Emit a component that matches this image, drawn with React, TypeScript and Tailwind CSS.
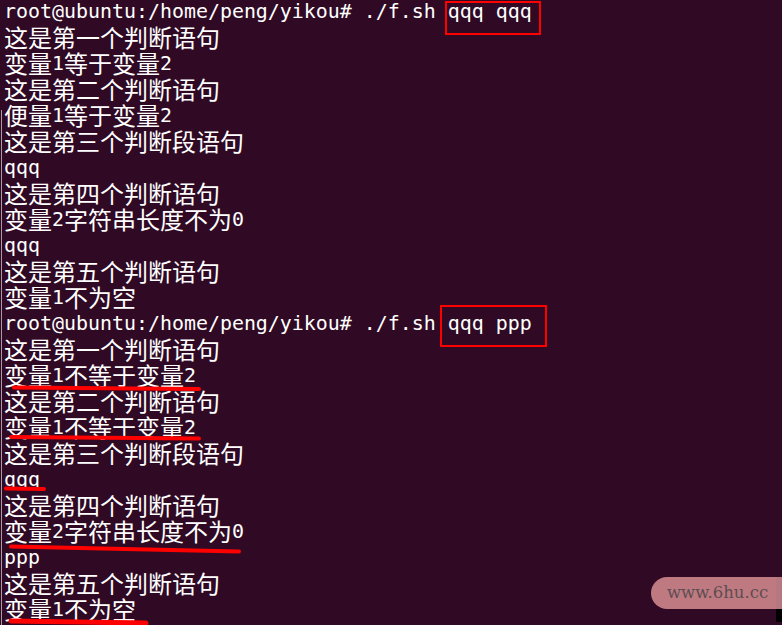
import React from "react";

const LINES: string[] = [
  "root@ubuntu:/home/peng/yikou# ./f.sh qqq qqq",
  "这是第一个判断语句",
  "变量1等于变量2",
  "这是第二个判断语句",
  "便量1等于变量2",
  "这是第三个判断段语句",
  "qqq",
  "这是第四个判断语句",
  "变量2字符串长度不为0",
  "qqq",
  "这是第五个判断语句",
  "变量1不为空",
  "root@ubuntu:/home/peng/yikou# ./f.sh qqq ppp",
  "这是第一个判断语句",
  "变量1不等于变量2",
  "这是第二个判断语句",
  "变量1不等于变量2",
  "这是第三个判断段语句",
  "qqq",
  "这是第四个判断语句",
  "变量2字符串长度不为0",
  "ppp",
  "这是第五个判断语句",
  "变量1不为空",
];

const CJK = /[\u4e00-\u9fff]/;

function Line({ text }: { text: string }) {
  const parts = text.match(/[\u4e00-\u9fff]+|[^\u4e00-\u9fff]+/g) || [];
  return (
    <div className="h-[26px] leading-[26px] whitespace-pre">
      {parts.map((p, i) =>
        CJK.test(p) ? (
          <span
            key={i}
            className="inline-block h-[26px] align-top font-['Noto_Sans_CJK_SC',sans-serif] text-[24px] leading-[23px]"
          >
            {p}
          </span>
        ) : (
          <span key={i}>{p}</span>
        )
      )}
    </div>
  );
}

export default function App() {
  return (
    <div className="relative w-[782px] h-[625px] overflow-hidden bg-[#300a24] text-white font-['DejaVu_Sans_Mono',monospace] text-[19.93px]">
      <div className="flex flex-col pl-[4px] -mt-[1px]">
        {LINES.map((l, i) => (
          <Line key={i} text={l} />
        ))}
      </div>

      {/* left edge line */}
      <div className="absolute left-[1px] top-[110px] bottom-0 w-[1px] bg-[#a99aa4]" />

      {/* annotations */}
      <svg
        className="absolute inset-0 pointer-events-none"
        width="782"
        height="625"
        viewBox="0 0 782 625"
      >
        <rect x="446" y="2" width="94" height="32" fill="none" stroke="#ff0000" strokeWidth="2" />
        <rect x="441" y="306" width="105" height="40" fill="none" stroke="#ff0000" strokeWidth="2" />
        <line x1="14" y1="387.5" x2="199" y2="389" stroke="#ff0000" strokeWidth="4" strokeLinecap="round" />
        <line x1="11" y1="437" x2="199" y2="438.5" stroke="#ff0000" strokeWidth="4" strokeLinecap="round" />
        <line x1="6" y1="488.5" x2="44" y2="489" stroke="#ff0000" strokeWidth="4" strokeLinecap="round" />
        <line x1="11" y1="546.5" x2="239" y2="551.5" stroke="#ff0000" strokeWidth="4" strokeLinecap="round" />
        <line x1="11" y1="621" x2="146" y2="623" stroke="#ff0000" strokeWidth="5" strokeLinecap="round" />
      </svg>

      {/* watermark */}
      <div className="absolute left-[651px] top-[577px] w-[131px] h-[32px] flex">
        <div className="flex-1 h-full rounded-l-[16px] bg-[#be7a80] flex items-center pl-[16px]">
          <span className="font-['DejaVu_Serif',serif] text-[16.5px] text-[#5d4d52] leading-none">
            www.6hu.cc
          </span>
        </div>
        <div className="w-[6px] h-full bg-[#b57780]" />
      </div>
      <div className="absolute left-[776px] top-[609px] w-[6px] h-[13px] bg-black" />
    </div>
  );
}
